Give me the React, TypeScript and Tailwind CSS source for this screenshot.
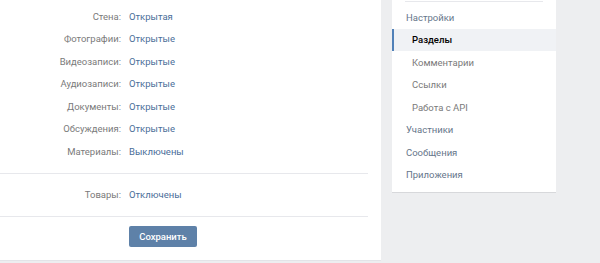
import React from "react";

const rows: [string, string][] = [
  ["Стена:", "Открытая"],
  ["Фотографии:", "Открытые"],
  ["Видеозаписи:", "Открытые"],
  ["Аудиозаписи:", "Открытые"],
  ["Документы:", "Открытые"],
  ["Обсуждения:", "Открытые"],
  ["Материалы:", "Выключены"],
];

function Row({ label, value }: { label: string; value: string }) {
  return (
    <div className="flex items-center h-[22.5px]">
      <div className="w-[121px] text-right text-[#7a7a7a]">{label}</div>
      <div className="ml-[8px] text-[#4a6e99]">{value}</div>
    </div>
  );
}

export default function App() {
  return (
    <div
      className="w-[600px] h-[263px] bg-[#edeef0] flex items-start overflow-hidden text-[9.5px] leading-none"
      style={{ fontFamily: "Roboto, 'Open Sans', sans-serif" }}
    >
      <div className="w-[381px] h-[261px] bg-white border-b border-[#e3e4e8] flex flex-col">
        <div className="pt-[5px]">
          {rows.map(([l, v]) => (
            <Row key={l} label={l} value={v} />
          ))}
        </div>
        <div className="mt-[10px] mr-[13px] h-px bg-[#e7e8ec]" />
        <div className="pt-[10px] pb-[10px]">
          <Row label="Товары:" value="Отключены" />
        </div>
        <div className="mr-[13px] h-px bg-[#e7e8ec]" />
        <div className="pl-[129px] pt-[9px]">
          <button className="h-[21px] w-[68px] bg-[#5e81a8] text-white text-[9.5px] font-medium rounded-[2px] flex items-center justify-center">
            Сохранить
          </button>
        </div>
      </div>
      <div className="ml-[11px] w-[164px] bg-white flex flex-col pb-[6px] shadow-[0_1px_0_0_#d7d8db]">
        <div className="mx-[13px] mt-[1px] h-px bg-[#e7e8ec]" />
        <div className="pt-[4px]">
          <div className="h-[22.5px] flex items-center pl-[14px] text-[#66768a]">Настройки</div>
          <div className="h-[22.5px] flex items-center pl-[18px] bg-[#f0f2f5] border-l-2 border-[#5181b8] text-black font-medium">
            Разделы
          </div>
          <div className="h-[22.5px] flex items-center pl-[20px] text-[#7a7a7a]">Комментарии</div>
          <div className="h-[22.5px] flex items-center pl-[20px] text-[#7a7a7a]">Ссылки</div>
          <div className="h-[22.5px] flex items-center pl-[20px] text-[#7a7a7a]">Работа с API</div>
          <div className="h-[22.5px] flex items-center pl-[14px] text-[#66768a]">Участники</div>
          <div className="h-[22.5px] flex items-center pl-[14px] text-[#66768a]">Сообщения</div>
          <div className="h-[22.5px] flex items-center pl-[14px] text-[#66768a]">Приложения</div>
        </div>
      </div>
    </div>
  );
}
